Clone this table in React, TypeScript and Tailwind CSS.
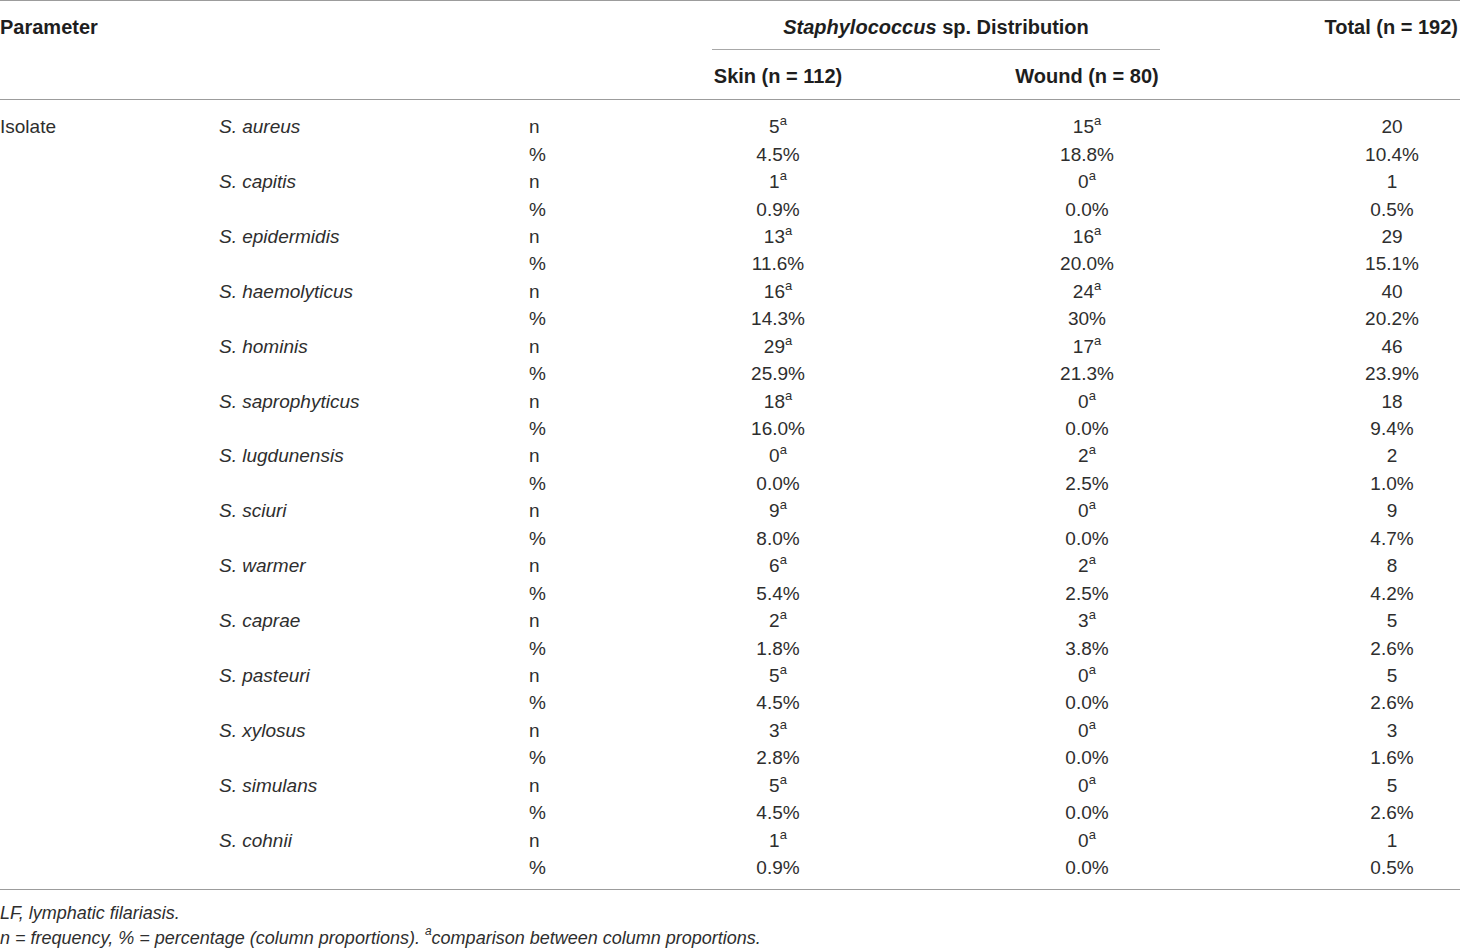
import React from "react";

const rows: [string, [number, string], [number, string], [number, string]][] = [
  ["S. aureus", [5, "4.5%"], [15, "18.8%"], [20, "10.4%"]],
  ["S. capitis", [1, "0.9%"], [0, "0.0%"], [1, "0.5%"]],
  ["S. epidermidis", [13, "11.6%"], [16, "20.0%"], [29, "15.1%"]],
  ["S. haemolyticus", [16, "14.3%"], [24, "30%"], [40, "20.2%"]],
  ["S. hominis", [29, "25.9%"], [17, "21.3%"], [46, "23.9%"]],
  ["S. saprophyticus", [18, "16.0%"], [0, "0.0%"], [18, "9.4%"]],
  ["S. lugdunensis", [0, "0.0%"], [2, "2.5%"], [2, "1.0%"]],
  ["S. sciuri", [9, "8.0%"], [0, "0.0%"], [9, "4.7%"]],
  ["S. warmer", [6, "5.4%"], [2, "2.5%"], [8, "4.2%"]],
  ["S. caprae", [2, "1.8%"], [3, "3.8%"], [5, "2.6%"]],
  ["S. pasteuri", [5, "4.5%"], [0, "0.0%"], [5, "2.6%"]],
  ["S. xylosus", [3, "2.8%"], [0, "0.0%"], [3, "1.6%"]],
  ["S. simulans", [5, "4.5%"], [0, "0.0%"], [5, "2.6%"]],
  ["S. cohnii", [1, "0.9%"], [0, "0.0%"], [1, "0.5%"]],
];

const cols = "grid grid-cols-[219px_310px_183px_132px_170px_146px_164px_136px]";

function Sup({ v }: { v: number }) {
  return (
    <span>
      {v}
      <sup className="text-[13px] align-top relative top-[-3px] leading-none">a</sup>
    </span>
  );
}

export default function App() {
  return (
    <div
      className="w-[1460px] h-[948px] bg-white text-[#2e2e2e] text-[19px] overflow-hidden"
      style={{ fontFamily: '"Liberation Sans", Arial, sans-serif' }}
    >
      <div className="border-t border-[#9c9c9c]" />
      {/* header */}
      <div className={`${cols} font-bold text-[#1e1e1e] text-[20px] h-[49px] items-center`}>
        <div className="pt-[3px]">Parameter</div>
        <div />
        <div />
        <div className="col-span-3 h-full flex items-center justify-center border-b border-[#a8a8a8] pt-[3px]">
          <span className="whitespace-nowrap">
            <i>Staphylococcus</i> sp. Distribution
          </span>
        </div>
        <div />
        <div className="justify-self-end whitespace-nowrap pr-[2px] pt-[3px]">Total (n = 192)</div>
      </div>
      <div className={`${cols} font-bold text-[#1e1e1e] text-[20px] h-[50px] items-center border-b border-[#9c9c9c]`}>
        <div />
        <div />
        <div />
        <div className="text-center whitespace-nowrap pt-[3px]">Skin (n = 112)</div>
        <div />
        <div className="text-center whitespace-nowrap pt-[3px]">Wound (n = 80)</div>
        <div />
        <div />
      </div>
      {/* body */}
      <div className="pt-[13px] pb-[8px] border-b border-[#9c9c9c]">
        {rows.map(([name, skin, wound, total], i) => (
          <React.Fragment key={name}>
            <div className={`${cols} h-[27.45px] items-center leading-none`}>
              <div>{i === 0 ? "Isolate" : ""}</div>
              <div className="italic">{name}</div>
              <div>n</div>
              <div className="text-center">
                <Sup v={skin[0]} />
              </div>
              <div />
              <div className="text-center">
                <Sup v={wound[0]} />
              </div>
              <div />
              <div className="text-center">{total[0]}</div>
            </div>
            <div className={`${cols} h-[27.45px] items-center leading-none`}>
              <div />
              <div />
              <div>%</div>
              <div className="text-center">{skin[1]}</div>
              <div />
              <div className="text-center">{wound[1]}</div>
              <div />
              <div className="text-center">{total[1]}</div>
            </div>
          </React.Fragment>
        ))}
      </div>
      {/* footnotes */}
      <div className="italic text-[18px] leading-[25px] pt-[11px] text-[#2e2e2e]">
        <p>LF, lymphatic filariasis.</p>
        <p>
          n = frequency, % = percentage (column proportions).{" "}
          <sup className="text-[12px] align-top relative top-[-1px] leading-none">a</sup>comparison between column proportions.
        </p>
      </div>
    </div>
  );
}
